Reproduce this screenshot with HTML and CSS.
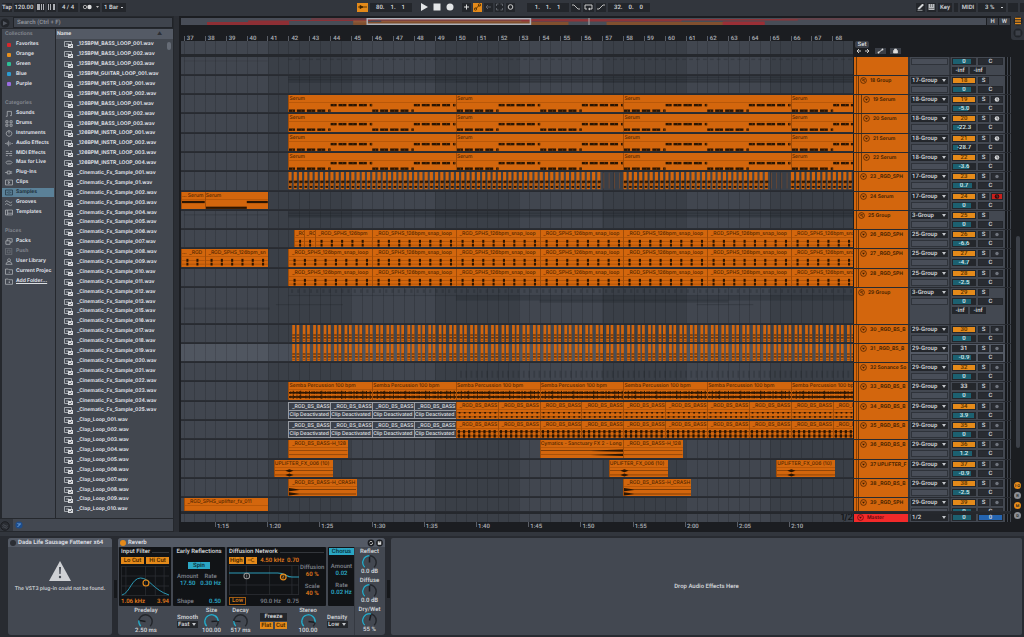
FILE: index.html
```html
<!DOCTYPE html>
<html lang="en">
<head>
<meta charset="utf-8">
<title>Arrangement</title>
<link rel="stylesheet" href="styles.css">
</head>
<body>
<header class="topbar">
  <div class="bar-group">
    <button class="tb w10">Tap</button>
    <input class="tb w20" aria-label="Tempo" value="120.00">
    <button class="tb w9" aria-label="Nudge down"><svg viewBox="0 0 9 8"><path d="M1 1h3v6H1zM5 1h1v6H5zM7 1h1v6H7z" fill="#aeb1b6"/></svg></button>
    <button class="tb w9" aria-label="Nudge up"><svg viewBox="0 0 9 8"><path d="M1 1h1v6H1zM3 1h1v6H3zM6 1h2v6H6z" fill="#aeb1b6"/></svg></button>
    <input class="tb w20" aria-label="Time signature" value="4 / 4">
    <button class="tb w20" aria-label="Metronome"><svg viewBox="0 0 20 8"><circle cx="5" cy="4" r="1.700" fill="none" stroke="#aaa"/><circle cx="9.500" cy="4" r="2.200" fill="#ddd"/><path d="M16 3h3l-1.500 2z" fill="#bbb"/></svg></button>
    <select class="tb w24" aria-label="Quantization"><option>1 Bar</option></select>
  </div>
  <div class="bar-group">
    <button class="tb w11 on" aria-label="Follow"><svg viewBox="0 0 11 8"><path d="M1 4h9M3 2.500v3L6 4z" stroke="#3a2200" fill="#3a2200" stroke-width=".8"/></svg></button>
    <input class="tb w42" aria-label="Position" value="80.    1.    1">
    <div class="transport">
      <button class="flat" aria-label="Play"><svg viewBox="0 0 8 8"><path d="M1 0l7 4-7 4z" fill="#e4e6e8"/></svg></button>
      <button class="flat" aria-label="Stop"><svg viewBox="0 0 8 8"><path d="M.5.5h7v7h-7z" fill="#e4e6e8"/></svg></button>
      <button class="flat" aria-label="Record"><svg viewBox="0 0 8 8"><circle cx="4" cy="4" r="3.500" fill="#e4e6e8"/></svg></button>
    </div>
    <button class="tb w9" aria-label="Overdub"><svg viewBox="0 0 8 8"><path d="M4 1.500v5M1.500 4h5" stroke="#ddd"/></svg></button>
    <button class="tb w9 on" aria-label="Automation arm"><svg viewBox="0 0 8 8"><path d="M2 6l4-4" stroke="#3a2200" stroke-width=".8"/><circle cx="2" cy="6" r="1.200" fill="none" stroke="#3a2200" stroke-width=".7"/><circle cx="6" cy="2" r="1.200" fill="none" stroke="#3a2200" stroke-width=".7"/></svg></button>
    <button class="tb w9" aria-label="Re-enable automation"><svg viewBox="0 0 8 8"><path d="M6.500 4h-5l2-2m-2 2l2 2" stroke="#5c6068" fill="none"/></svg></button>
    <button class="tb w9" aria-label="Capture"><svg viewBox="0 0 8 8"><path d="M1 3V1h2M5 1h2v2M7 5v2H5M3 7H1V5" stroke="#6a6e76" fill="none" stroke-width=".8"/></svg></button>
    <button class="tb w9" aria-label="Session record"><svg viewBox="0 0 8 8"><circle cx="4" cy="4" r="2.300" fill="none" stroke="#ccc"/></svg></button>
    <input class="tb w42 gap-l" aria-label="Loop start" value="1.    1.    1">
    <button class="tb w10" aria-label="Punch in"><svg viewBox="0 0 10 8"><path d="M1 2h2l4 4h2" stroke="#ccc" fill="none" stroke-width=".9"/></svg></button>
    <button class="tb w11" aria-label="Loop"><svg viewBox="0 0 11 8"><path d="M4 6H2V2h7v4H6m1-1L5.500 6 7 7" stroke="#ddd" fill="none" stroke-width=".9"/></svg></button>
    <button class="tb w10" aria-label="Punch out"><svg viewBox="0 0 10 8"><path d="M1 6h2l4-4h2" stroke="#ccc" fill="none" stroke-width=".9"/></svg></button>
    <input class="tb w42" aria-label="Loop length" value="32.    0.    0">
  </div>
  <div class="bar-group end">
    <button class="tb w9" aria-label="Draw mode"><svg viewBox="0 0 8 8"><path d="M2 5l4-4 1 1-4 4H1.500zM1 7.300h5" fill="#e4e6e8" stroke="#e4e6e8" stroke-width=".6"/></svg></button>
    <button class="tb w9" aria-label="Computer keyboard"><svg viewBox="0 0 8 8"><path d="M1 1h6v6H1z" fill="#b9bcc0"/><path d="M3 1v3M5 1v3M1 5.500h6" stroke="#555" stroke-width=".6"/></svg></button>
    <button class="tb w13">Key</button>
    <span class="tb w3"></span>
    <button class="tb w15">MIDI</button>
    <select class="tb w28 load" aria-label="CPU load"><option>3 %</option></select>
    <span class="tb w10"></span>
    <span class="tb w3"></span>
  </div>
</header>

<main class="main">
  <section class="browser">
    <div class="search-row">
      <button class="round" aria-label="Show browser"><svg viewBox="0 0 10 10"><circle cx="5" cy="5" r="4.500" fill="#22252a"/><path d="M3 3l4.500 2.200L3 7.500z" fill="#50555e"/></svg></button>
      <input class="search" type="search" placeholder="Search (Ctrl + F)" aria-label="Search">
    </div>
    <div class="browser-body">
      <nav class="side" id="side"></nav>
      <div class="files">
        <div class="files-head"><span class="files-name">Name</span><span class="sort">▲</span></div>
        <div class="files-body"><ul class="file-list" id="files"></ul><div class="thumb"></div></div>
      </div>
    </div>
    <div class="browser-foot">
      <button class="round" aria-label="Groove pool"><svg viewBox="0 0 10 10"><circle cx="5" cy="5" r="4.300" fill="#2a2d33" stroke="#1d1f23"/><path d="M2.500 4.500q1.200-1.500 2.500 0t2.500 0M2.500 6.500q1.200-1.500 2.500 0t2.500 0" stroke="#555a63" fill="none" stroke-width=".7"/></svg></button>
      <div class="foot-box"><svg class="foot-ico" viewBox="0 0 8 8"><circle cx="4" cy="4" r="3.600" fill="#1d4d8c"/><path d="M2.500 2l2 2-2 2M5 2v2" stroke="#7fb4ee" stroke-width=".8" fill="none"/></svg></div>
    </div>
  </section>

  <section class="arr">
    <div class="overview-row">
      <svg class="overview" viewBox="0 0 804 7" preserveAspectRatio="none">
        <path d="M0 0h804v7H0z" fill="#484d57"/>
        <path d="M26 4h82v3H26zM67 2.500h41v3H67z" fill="#8e2f35"/>
        <path d="M108 2h82v1h-82zM130 .5h160v1H130z" fill="#8a3137"/>
        <path d="M172 4h215v3H172zM425 4h118v3H425z" fill="#81502f"/>
        <path d="M172 2.500h15v2h-15zM200 2.500h150v1.500H200z" fill="#90583a"/>
        <path d="M186 1h430v1.500H186zM340 1.500h160v2H340z" fill="#8e3439"/>
        <path d="M541 3.500h42V7h-42z" fill="#9a2f36"/>
        <path d="M600 .5h158v1H600z" fill="#7d3a40"/>
        <path d="M407 0h1v7h-1z" fill="#aaa"/>
        <path d="M186 .75h163v5.500H186z" fill="none" stroke="#adb0b8" stroke-width="1.500"/>
      </svg>
      <button class="hw">H</button><button class="hw">W</button>
    </div>
    <div class="ruler" id="bars"></div>
    <div class="scrub-row">
      <div class="lane scrub"></div>
      <div class="set">
        <button class="set-btn">Set</button>
        <div class="set-tools">
          <svg viewBox="0 0 16 6"><path d="M6 3H2l2-2M2 3l2 2M10 3h4l-2-2m2 2l-2 2" stroke="#ccc" fill="none"/></svg>
          <button class="tool" aria-label="Automation mode"><svg viewBox="0 0 10 6"><path d="M2.500 5l5-4" stroke="#ddd"/><circle cx="3" cy="4.500" r=".9" fill="#ddd"/><circle cx="7" cy="1.500" r=".9" fill="#ddd"/></svg></button>
          <button class="tool" aria-label="Lock envelopes"><svg viewBox="0 0 10 6"><path d="M3 2.500h4V5H3zM4 2.500V1h2v1.500" fill="#ddd" stroke="#ddd" stroke-width=".7"/></svg></button>
        </div>
      </div>
    </div>
    <div class="tracks" id="tracks"></div>
    <div class="master" id="master"></div>
    <div class="time" id="time"></div>
  </section>

  <aside class="rail">
    <div class="rail-top">
      <button class="rail-btn" aria-label="Arrangement view"><svg viewBox="0 0 10 10"><circle cx="5" cy="5" r="4.500" fill="#212429"/><path d="M2 2.500h6M2 5h6M2 7.500h6" stroke="#e48a1a" stroke-width="1.300"/></svg></button>
      <button class="rail-btn" aria-label="Session view"><svg viewBox="0 0 10 10"><circle cx="5" cy="5" r="4.500" fill="#212429"/><path d="M2.500 2.500h5v5h-5z" fill="#3c4048"/></svg></button>
    </div>
    <div class="rail-scroll"></div>
    <div class="toggles">
      <button class="dot on">I·O</button><button class="dot">R</button><button class="dot on">M</button><button class="dot">D</button>
    </div>
  </aside>
</main>

<footer class="devices">
  <div class="chain-edge"></div>
  <section class="device missing">
    <h2 class="dev-head"><span class="led off"></span>Dada Life Sausage Fattener x64</h2>
    <div class="missing-body">
      <svg class="warn" viewBox="0 0 22 20"><path d="M11 0l11 20H0z" fill="#cfd1d4"/><path d="M10 6h2l-.4 7h-1.200z" fill="#444952"/><circle cx="11" cy="16" r="1.200" fill="#444952"/></svg>
      <p>The VST3 plug-in could not be found.</p>
    </div>
  </section>
  <div class="chain-meter"></div>
  <section class="device reverb">
    <h2 class="dev-head"><span class="led"></span>Reverb
      <span class="dev-icons"><svg viewBox="0 0 16 8"><circle cx="4" cy="4" r="3.400" fill="#1a1c20"/><circle cx="4" cy="4" r="1.600" fill="none" stroke="#bbb" stroke-dasharray="3.500 1.500"/><circle cx="12.500" cy="4" r="3.400" fill="#1a1c20"/><path d="M10.800 2.300h3.400v3.400h-3.400z" fill="#ddd"/><path d="M11.700 2.300h1.600v1.200h-1.600z" fill="#555"/></svg></span>
    </h2>
    <div class="rv">
      <div class="rv-main">
        <div class="panels">
          <div class="panel p-in">
            <h3 class="ttl">Input Filter</h3>
            <div class="pair"><button class="o">Lo Cut</button><button class="o">Hi Cut</button></div>
            <svg class="graph" viewBox="0 0 49 30" preserveAspectRatio="none"><path d="M0 .5h49M0 10h49M0 20h49M0 29.500h49M.5 0v30M5 0v30M25 0v30M35 0v30M44 0v30" stroke="#2b2e33" stroke-width=".8"/><path d="M1 29C9 27 11 12 20 12S33 24 49 29" fill="none" stroke="#2c9cb8"/><circle cx="25.500" cy="17" r="3" fill="none" stroke="#e48a1a" stroke-width="1.200"/></svg>
            <div class="split orange"><span>1.06 kHz</span><span>3.94</span></div>
          </div>
          <div class="panel p-er">
            <h3 class="ttl plain">Early Reflections</h3>
            <button class="b spin">Spin</button>
            <div class="split pad"><span class="lab">Amount<b>17.50</b></span><span class="lab">Rate<b>0.30 Hz</b></span></div>
            <div class="split pad low"><span class="dim">Shape</span><b class="cy">0.50</b></div>
          </div>
          <div class="panel p-df">
            <h3 class="ttl">Diffusion Network</h3>
            <div class="df">
              <div class="df-l">
                <div class="hi"><button class="o">High</button><button class="o" aria-label="Filter type"><svg class="shelf" viewBox="0 0 11 6"><path d="M1 3h4l1-2h2M5 3l1 2h3" stroke="#5c3200" fill="none" stroke-width=".8"/></svg></button><span class="or">4.50 kHz</span><span class="or">0.70</span></div>
                <svg class="graph" viewBox="0 0 69 30" preserveAspectRatio="none"><path d="M0 .5h69M0 20h69M0 29.500h69M.5 0v30M17 0v30M40 0v30M62 0v30M68.500 0v30" stroke="#2b2e33" stroke-width=".8"/><path d="M0 8h48c8 0 8 4 14 4h7" fill="none" stroke="#2c9cb8"/><circle cx="17.500" cy="11" r="2.800" fill="none" stroke="#999"/><circle cx="53.500" cy="12" r="2.800" fill="none" stroke="#e48a1a" stroke-width="1.200"/><path d="M17.500 9.500v3" stroke="#999" stroke-width=".7"/><path d="M52.500 11h2l-2 2h2" stroke="#e48a1a" fill="none" stroke-width=".7"/></svg>
                <div class="hi"><button class="ol">Low</button><span class="dim push">90.0 Hz</span><span class="dim">0.75</span></div>
              </div>
              <div class="df-r"><span class="dim">Diffusion</span><b>60 %</b><span class="dim sp">Scale</span><b>40 %</b></div>
            </div>
          </div>
          <div class="panel p-ch"><button class="b">Chorus</button><span class="dim sp">Amount</span><b>0.02</b><span class="dim sp">Rate</span><b>0.02 Hz</b></div>
        </div>
        <div class="knobs">
          <div class="kn"><span>Predelay</span><svg class="knob" data-value=".2"></svg><span>2.50 ms</span></div>
          <label class="dd">Smooth<span class="pick"><select><option>Fast</option></select></span></label>
          <div class="kn"><span>Size</span><svg class="knob" data-value=".82"></svg><span>100.00</span></div>
          <div class="kn"><span>Decay</span><svg class="knob" data-value=".18"></svg><span>517 ms</span></div>
          <div class="fz"><button class="dk">Freeze</button><div class="pair"><button class="o">Flat</button><button class="o">Cut</button></div></div>
          <div class="kn"><span>Stereo</span><svg class="knob" data-value=".86"></svg><span>100.00</span></div>
          <label class="dd">Density<span class="pick"><select><option>Low</option></select></span></label>
        </div>
      </div>
      <div class="rv-side">
        <div class="kn"><span>Reflect</span><svg class="knob" data-value=".5"></svg><span>0.0 dB</span></div>
        <div class="kn"><span>Diffuse</span><svg class="knob" data-value=".5"></svg><span>0.0 dB</span></div>
        <div class="kn"><span>Dry/Wet</span><svg class="knob" data-value=".55"></svg><span>55 %</span></div>
      </div>
    </div>
  </section>
  <div class="chain-meter"></div>
  <section class="drop">Drop Audio Effects Here</section>
</footer>
<script src="app.js"></script>
</body>
</html>
```

FILE: styles.css
```css
* { box-sizing: border-box; }
:root {
  --chrome: #32363d;
  --panel: #434851;
  --panel-hi: #545a65;
  --dark: #1b1d21;
  --field: #23262b;
  --text: #cdd0d4;
  --orange: #d3660d;
  --amber: #e48a1a;
  --teal: #1c6070;
  --cyan: #2ba7c4;
  --label: Inter, Roboto, sans-serif;
}
body {
  margin: 0;
  height: 100vh;
  display: flex;
  flex-direction: column;
  overflow: hidden;
  background: var(--chrome);
  color: var(--text);
  font: 600 6px/7px Roboto, "Liberation Sans", sans-serif;
  text-rendering: geometricPrecision;
}
button, input, select {
  font: inherit;
  color: inherit;
  text-rendering: inherit;
  border: 0;
  border-radius: 0;
  margin: 0;
  padding: 0;
  background: none;
  appearance: none;
  min-width: 0;
  text-align: center;
}
svg { display: block; }
h2, h3, p, ul { margin: 0; padding: 0; font: inherit; list-style: none; }
b { font-weight: inherit; }

/* top bar */
.topbar { flex: none; height: 16px; padding: 2px 0 4px 2px; display: grid; grid-template-columns: 356fr 290fr 376fr; }
.bar-group { display: flex; gap: 2px; align-items: center; }
.end { justify-content: flex-end; }
.tb { flex: none; height: 9px; background: var(--field); line-height: 9px; display: block; white-space: pre; }
.tb svg { width: 100%; height: 8px; }
.tb.on { background: var(--amber); }
.w3 { width: 4px; } .w9 { width: 9px; } .w10 { width: 10px; } .w11 { width: 11px; }
.w13 { width: 14px; } .w15 { width: 16px; } .w20 { width: 20px; } .w24 { width: 24px; } .w28 { width: 28px; } .w42 { width: 42px; }
.gap-l { margin-left: 10px; }
.transport { display: flex; gap: 5px; padding: 0 6px; }
.flat svg { width: 8px; height: 8px; }
select.tb { background: var(--field) linear-gradient(var(--text), var(--text)) right 3px center / 2px 1px no-repeat; text-align: left; padding-left: 2px; }
select.load { padding-left: 7px; }

/* main */
.main { flex: 1; min-height: 0; display: grid; grid-template-columns: 174px minmax(0, 1fr) 13px; }

/* browser */
.browser { display: flex; flex-direction: column; min-height: 0; padding: 1px 1px 0 0; background: #25282d; }
.search-row { flex: none; display: flex; height: 12px; padding-bottom: 1px; }
.round { flex: none; width: 13px; background: var(--chrome); }
.round svg { width: 10px; height: 10px; }
.search { flex: 1; background: #3f444d; border: 1px solid #202328; text-align: left; padding-left: 3px; }
.search::placeholder { color: #8d9198; opacity: 1; }
.browser-body { flex: 1; min-height: 0; display: grid; grid-template-columns: 53px 1fr; column-gap: 1px; padding-left: 2px; font-family: var(--label); font-size: 5px; font-weight: 700; color: #dcdfe2; }
.side { background: var(--panel); display: grid; grid-auto-rows: 2.02%; overflow: hidden; padding-top: 1px; }
.side-head { color: #80848c; padding-left: 3px; align-self: center; }
.side-item { display: flex; align-items: center; gap: 3px; padding-left: 3px; color: inherit; text-decoration: none; white-space: nowrap; overflow: hidden; }
.side-item svg { width: 8px; height: 7px; flex: none; fill: none; stroke: #b8bbc0; stroke-width: 1; }
.side-item.current { background: #5b8198; color: #20313c; margin-right: 1px; }
.side-item.current svg { stroke: #20313c; }
.side-item.off { opacity: .4; }
.side-item.link { text-decoration: underline; }
.chip { width: 4px; height: 4px; border-radius: 1px; margin: 0 2px; flex: none; background: var(--c); }
.files { background: #42474f; display: flex; flex-direction: column; min-height: 0; overflow: hidden; }
.files-head { flex: none; height: 10px; display: flex; align-items: center; background: var(--panel-hi); padding-left: 1px; color: #e3e5e8; }
.files-name { flex: 1; }
.sort { width: 16px; color: #2c2f35; }
.files-body { flex: 1; min-height: 0; display: flex; }
.file-list { flex: 1; min-width: 0; display: grid; grid-auto-rows: 2.07%; overflow: hidden; padding-top: 1px; }
.file { display: flex; align-items: center; gap: 4px; padding-left: 8px; white-space: nowrap; }
.file svg { width: 9px; height: 7px; flex: none; }
.thumb { width: 4px; height: 8px; border-radius: 2px; background: #666c76; margin: 3px 2px 0 0; }
.browser-foot { flex: none; height: 14px; display: flex; padding: 1px 0; }
.browser-foot .round { padding-top: 1px; }
.foot-box { flex: 1; background: var(--panel); padding: 2px; }
.foot-ico { width: 8px; height: 8px; }

/* arrangement */
.arr { background: var(--dark); border-left: 5px solid #2b2e34; padding: 2px 0 0 2px; display: flex; flex-direction: column; min-width: 0; min-height: 0; }
.overview-row { flex: none; height: 7px; display: flex; gap: 1px; padding-right: 1px; }
.overview { flex: 1; min-width: 0; height: 7px; }
.hw { width: 11px; background: #3b3f47; }
.ruler, .time { flex: none; display: flex; overflow: hidden; margin-right: 158px; color: #a5a8ae; }
.ruler { height: 16px; align-items: flex-end; }
.time { height: 10px; align-items: flex-start; }
.tick { flex: none; border-left: 1px solid #5a5e66; padding-left: 2px; height: 5px; line-height: 5px; white-space: nowrap; }
.time .tick { line-height: 9px; padding-left: 1px; }
.scrub-row, .track, .master { display: grid; grid-template-columns: minmax(0, 1fr) 57px 41px 54px 6px; }
.lane {
  display: flex;
  overflow: hidden;
  min-width: 0;
  background:
    repeating-linear-gradient(90deg, rgba(20, 22, 26, .22) .42% calc(.42% + 1px), transparent calc(.42% + 1px) 1.9776%),
    linear-gradient(90deg, #41464f 12.88%, #3a3f47 12.88% 25.34%, #41464f 25.34% 37.8%, #3a3f47 37.8% 50.26%, #41464f 50.26% 62.72%, #3a3f47 62.72% 75.18%, #41464f 75.18% 87.65%, #3a3f47 87.65%);
}
.scrub-row { flex: none; height: 16px; border-bottom: 3px solid #25282d; }
.set { grid-column: 2 / 6; padding: 0 2px; background: var(--dark); margin-bottom: -3px; }
.set-btn { display: block; width: 14px; height: 7px; background: #3b3f47; border-radius: 2px; }
.set-tools { display: flex; gap: 4px; height: 6px; align-items: center; }
.set-tools > svg { width: 16px; height: 6px; }
.tool { width: 11px; background: #3b3f47; }
.tool svg { width: 11px; height: 6px; }
.tracks { flex: 1; min-height: 0; display: grid; grid-template-rows: minmax(0, 19fr) repeat(11, minmax(0, 19.3fr)) minmax(0, 37fr) repeat(9, minmax(0, 19.3fr)) minmax(0, 14fr); }
.track { overflow: hidden; border-bottom: 1px solid #282b31; background: var(--panel); }
.track .lane { border-bottom: 1px solid #2b2e34; }
.track.picked .lane { background: repeating-linear-gradient(90deg, rgba(20, 22, 26, .18) .42% calc(.42% + 1px), transparent calc(.42% + 1px) 1.9776%), linear-gradient(90deg, #505660 12.88%, #484e58 12.88% 25.34%, #505660 25.34% 37.8%, #484e58 37.8% 50.26%, #505660 50.26% 62.72%, #484e58 62.72% 75.18%, #505660 75.18% 87.65%, #484e58 87.65%); }
.track.picked { background: #545a65; }
.art { flex: none; width: 100%; height: 100%; }
.clip { flex: none; min-width: 0; background: var(--orange); border-left: 1px solid #a04c08; color: #542601; display: flex; flex-direction: column; overflow: hidden; font: 500 5px/8px var(--label); }
.clip-name { flex: none; height: 8px; line-height: 9px; white-space: pre; overflow: hidden; border-bottom: 1px solid #b95809; }
.clip svg { flex: 1; min-height: 0; width: 100%; }
.clip.dead { background: #3c414b; color: #e0e2e5; border: 1px solid #989ca3; border-width: 1px 0 1px 1px; }
.clip.dead .clip-name { border-color: #989ca3; height: 8px; }
.clip.dead .clip-name + .clip-name { border: 0; padding: 0; }

.name { display: flex; background: var(--orange); color: #3d1d00; border-left: 1px solid var(--dark); border-right: 2px solid #30343b; overflow: hidden; padding-left: 2px; }
.name i { flex: none; width: 2px; border-left: 1px solid #8a4206; }
.name i + i { width: 3px; }
.name-in { flex: 1; min-width: 0; display: flex; gap: 3px; border-left: 1px solid #6b3505; padding: 1px 0 0 1px; white-space: nowrap; overflow: hidden; font: 600 5px/8px var(--label); }
.fold { flex: none; width: 7px; height: 7px; }
.name + .io { border-right: 2px solid #30343b; }
.io { padding: 1px 1px 0; display: flex; flex-direction: column; gap: 2px; }
.pick select { width: 100%; height: 7px; flex: none; text-align: left; background: #24272c; line-height: 7px; overflow: hidden; padding-left: 1px; }
.pick { position: relative; display: flex; flex-direction: column; }
.pick::after { content: ""; position: absolute; right: 2px; top: 2px; border: 2px solid transparent; border-top: 3px solid #c3c6ca; border-bottom: 0; pointer-events: none; }
.io-box { flex: none; height: 7px; background: #494e58; border: 1px solid #2f333a; }
.mix { padding: 1px 1px 0; display: grid; grid-template-columns: 24px 11px 12px; grid-auto-rows: 7px; column-gap: 2px; row-gap: 2px; align-content: start; }
.act, .solo, .rec, .vol, .pan { height: 7px; background: #292c32; border: 1px solid #24272c; line-height: 5px; }
.act { background: var(--amber); color: #5c3200; }
.act.mute { background: #24272c; color: #e0e2e5; }
.vol { width: 24px; color: #cfe3e8; background: linear-gradient(90deg, var(--teal) var(--v), #24272c var(--v)); }
.pan { grid-column: 2 / 4; }
.rec svg { width: 100%; height: 5px; }
.rec.arm { background: #c8201c; }
.peak { background: #24272c; width: 16px; text-align: center; }
.peaks { grid-column: 1 / 4; display: flex; gap: 2px; }
.meter { background: linear-gradient(90deg, #16181b 2px, #41464f 2px 3px, #16181b 3px 5px, #41464f 5px); }
.master { flex: none; height: 10px; border-top: 2px solid #25282d; background: var(--panel); }
.master .lane { justify-content: flex-end; font: 500 9px/8px var(--label); color: #101215; }
.master .name { background: #f22a2a; color: #5c0a0a; }
.master .name-in { padding: 0 0 0 1px; border: 0; }
.master .io, .master .mix { padding-top: 0; }
.master .pan { background: #2464b0; }

.rail { display: flex; flex-direction: column; background: var(--dark); min-height: 0; padding-bottom: 13px; align-items: center; }
.rail-top { align-self: stretch; background: var(--chrome); height: 24px; display: flex; flex-direction: column; gap: 2px; align-items: center; border-radius: 0 0 0 3px; }
.rail-btn svg { width: 10px; height: 10px; }
.rail-scroll { flex: 211; width: 4px; border-radius: 2px; background: #3c4048; margin: 196px 0 34px; }
.toggles { display: flex; flex-direction: column; gap: 3px; }
.dot { width: 7px; height: 7px; border-radius: 50%; background: #8b8e94; color: #222; font-size: 4px; line-height: 7px; }
.dot.on { background: var(--amber); }

/* devices */
.devices { flex: none; height: 105px; padding: 2px 2px 2px; display: flex; background: #282b31; border-top: 4px solid var(--chrome); }
.chain-edge { width: 6px; }
.chain-meter { width: 6px; background: linear-gradient(#16181b, #16181b) center 42px / 3px 18px no-repeat; }
.device { border-radius: 3px; background: var(--panel); overflow: hidden; display: flex; flex-direction: column; }
.dev-head { flex: none; height: 9px; background: var(--panel-hi); display: flex; align-items: center; gap: 2px; padding-left: 2px; color: #dcdee1; }
.led { width: 6px; height: 6px; border-radius: 50%; background: var(--amber); }
.led.off { background: #2b2e34; }
.dev-icons { margin-left: auto; margin-right: 2px; }
.dev-icons svg { width: 16px; height: 8px; }
.missing { width: 104px; white-space: nowrap; }
.missing-body { flex: 1; display: flex; flex-direction: column; align-items: center; padding-top: 14px; gap: 5px; font: 600 5px/7px var(--label); }
.warn { width: 22px; height: 20px; }
.reverb { width: 267px; }
.rv { flex: 1; display: flex; padding: 0 1px; min-height: 0; }
.rv-main { flex: 1; display: flex; flex-direction: column; min-width: 0; }
.panels { height: 59px; display: grid; grid-template-columns: 52px 52px 99px 27px; column-gap: 2px; }
.panel { background: #111316; padding: 1px 2px; display: flex; flex-direction: column; border-radius: 1px; min-width: 0; white-space: nowrap; }
.ttl { display: flex; gap: 2px; height: 8px; line-height: 8px; align-items: center; }
.ttl::after { content: ""; flex: 1; border-bottom: 1px solid #33363b; }
.ttl.plain::after { display: none; }
.ttl.plain { justify-content: center; }
.pair { display: flex; gap: 2px; }
.o { background: var(--amber); color: #4f2b00; height: 7px; flex: 1; line-height: 7px; }
.p-in .pair { margin: 1px 0; }
.graph { width: 100%; height: 30px; margin: 1px 0 2px; }
.split { display: flex; justify-content: space-between; }
.orange, .or, .df-r b { color: #e07a1c; }
.dim, .lab { color: #777c84; }
.lab b, .cy, .p-ch b { color: var(--cyan); display: block; }
.b { background: var(--cyan); color: #0c3540; height: 7px; }
.spin { width: 22px; align-self: center; margin: 6px 0 4px; }
.pad { padding: 0 2px; text-align: center; }
.low { margin-top: 11px; }
.df { display: grid; grid-template-columns: 70px 1fr; column-gap: 1px; }
.hi { display: flex; gap: 2px; align-items: center; height: 8px; justify-content: space-between; }
.hi .o { flex: none; padding: 0 1px; }
.hi .o .shelf { width: 9px; height: 6px; }
.ol { border: 1px solid #a05c12; color: #d07a1c; height: 8px; line-height: 6px; padding: 0 2px; }
.push { margin-left: auto; margin-right: 4px; }
.df-r, .p-ch { display: flex; flex-direction: column; text-align: center; }
.df-r { padding-top: 8px; }
.df-r .sp { margin-top: 5px; }
.p-ch { padding: 1px; }
.p-ch .sp { margin-top: 8px; }
.p-ch .sp ~ .sp { margin-top: 5px; }
.knobs { flex: 1; display: grid; grid-template-columns: 30px 37px 27px 31px 35px 34px 23px; align-items: center; justify-items: center; padding-left: 12px; }
.kn { display: flex; flex-direction: column; align-items: center; line-height: 6px; white-space: nowrap; }
.knob { width: 17px; height: 17px; margin: -1px 0 -2px; }
.dd { display: flex; flex-direction: column; justify-self: end; width: 21px; }
.dk { background: var(--field); height: 8px; width: 27px; }
.fz { display: flex; flex-direction: column; gap: 1px; }
.rv-side { width: 30px; display: flex; flex-direction: column; justify-content: space-around; align-items: center; border-left: 1px solid #353941; }
.drop { flex: 1; background: var(--panel); display: flex; align-items: center; justify-content: center; border-radius: 2px; }
```

FILE: app.js
```js
const START = 36.866;
const SPAN = 32.1;
const END = START + SPAN;
const el = id => document.getElementById(id);
const pct = bars => (bars / SPAN * 100) + '%';
const pad = n => String(n).padStart(3, '0');

/* browser sidebar */
const ICON = {
  Sounds: 'M3 9V2h6v6M3 9H1M9 8H7',
  Drums: 'M1 1h3v3H1zM7 1h3v3H7zM1 6h3v3H1zM7 6h3v3H7z',
  Instruments: 'M5.500 1a4 4 0 1 0 .1 0M5.500 1v4',
  'Audio Effects': 'M0 5h2M3 3v4M5 1v8M7 3v4M9 5h2',
  'MIDI Effects': 'M1 2h4M7 2h3M1 5h9M1 8h3M6 8h4',
  'Max for Live': 'M3 3L1 5l2 2M8 3l2 2-2 2M3 3h5M3 7h5',
  'Plug-Ins': 'M0 5h3M3 3h4v4H3zM7 4h3M7 6h3',
  Clips: 'M.5 1.500h10v7H.5zM4.500 3.500v3l2.500-1.500z',
  Samples: 'M.5 1.500h10v7H.5zM3 4v2M5.500 3v4M8 4v2',
  Grooves: 'M0 4q2-3 5 0t5 0M0 8q2-3 5 0t5 0',
  Templates: 'M.5 1.500h10v7H.5zM3.500 1.500v7M3.500 6h7',
  Packs: 'M1 4h6v5H1zM3 4V1h7v5H7',
  Push: 'M.5.5h9v9h-9zM3 3h4v4H3z',
  'User Library': 'M5.500 1a2 2 0 1 0 .1 0M1 9q1-4 4.500-4T10 9z',
  'Current Projec': 'M.5 9V1.500h4l1 1h5V9zM5 6h2',
  'Add Folder...': 'M.5 9V1.500h4l1 1h5V9zM5 6h2M6 5v2'
};
const colors = { Favorites: '#d7282c', Orange: '#e8901d', Green: '#2cbf95', Blue: '#2a9bd0', Purple: '#9a6ce0' };
const side = [
  '#Collections', ...Object.keys(colors), '',
  '#Categories', 'Sounds', 'Drums', 'Instruments', 'Audio Effects', 'MIDI Effects', 'Max for Live', 'Plug-Ins', 'Clips', 'Samples', 'Grooves', 'Templates', '',
  '#Places', 'Packs', 'Push', 'User Library', 'Current Projec', 'Add Folder...'
];
el('side').innerHTML = side.map(s => {
  if (!s) return '<span></span>';
  if (s[0] === '#') return `<span class="side-head">${s.slice(1)}</span>`;
  const mark = colors[s] ? `<span class="chip" style="--c:${colors[s]}"></span>` : `<svg viewBox="0 0 11 10"><path d="${ICON[s]}"/></svg>`;
  const cls = { Samples: ' current', Push: ' off', 'Add Folder...': ' link' }[s] || '';
  return `<a href="#" class="side-item${cls}">${mark}${s}</a>`;
}).join('');

/* file list */
const range = (prefix, from, to) => Array.from({ length: to - from + 1 }, (_, i) => prefix + pad(from + i));
const files = [
  ...range('_125BPM_BASS_LOOP_', 1, 3), '_125BPM_GUITAR_LOOP_001', ...range('_125BPM_INSTR_LOOP_', 1, 2),
  ...range('_126BPM_BASS_LOOP_', 1, 3), ...range('_126BPM_INSTR_LOOP_', 1, 4),
  '_Cinematic_Fx_Sample_001', '_Cinematic_Fx_Sample_01', ...range('_Cinematic_Fx_Sample_', 2, 13), ...range('_Cinematic_Fx_Sample_', 15, 25),
  ...range('_Clap_Loop_', 1, 10)
];
const fileIcon = '<svg viewBox="0 0 9 7"><path d="M.5.5h7v5h-7zM2 3h3" fill="none" stroke="#aeb2b8" stroke-width=".9"/><path d="M4 3h5v4H4z" fill="#d9dbde"/><path d="M5.200 5l1 1 1.800-2" stroke="#42474f" fill="none" stroke-width=".8"/></svg>';
el('files').innerHTML = files.map(f => `<li class="file">${fileIcon}<span>${f}.wav</span></li>`).join('');

/* rulers */
const tick = (label, lead, width) => `<span class="tick" style="margin-left:${pct(lead)};width:${pct(width)}">${label}</span>`;
el('bars').innerHTML = Array.from({ length: 32 }, (_, i) => tick(37 + i, i ? 0 : 37 - START, 1)).join('');
const times = ['1:15', '1:20', '1:25', '1:30', '1:35', '1:40', '1:45', '1:50', '1:55', '2:00', '2:05', '2:10'];
el('time').innerHTML = times.map((t, i) => tick(t, i ? 0 : 1.62, 2.495)).join('');

/* clip artwork; x is in hundredths of a bar, y in percent of the clip body */
const INK = '#2a1503';
const box = (x, y, w, h, fill = INK) => `<rect x="${x}" y="${y}" width="${w}" height="${h}" fill="${fill}"/>`;
const svg = (bars, body) => `<svg viewBox="0 0 ${bars * 100} 100" preserveAspectRatio="none">${body}</svg>`;
const ART = {
  serum(bars) {
    let s = '';
    for (let b = 0; b < bars; b += 2) {
      const y = b % 4 ? 10 : 70;
      [[0, 29], [38, 38], [86, 40], [136, 38], [188, 12]].forEach(([x, w]) => {
        s += box(b * 100 + x, y, w, 26) + box(b * 100 + x + w / 2, y, 3, 26, '#7a3d08');
      });
    }
    return s;
  },
  hits(bars) {
    let s = box(0, 34, bars * 100, 5, '#8a430a') + box(0, 74, bars * 100, 5, '#8a430a');
    for (let x = 22; x < bars * 100; x += 50) s += box(x, 20, 10, 32) + box(x, 62, 10, 30);
    return s;
  },
  wave(bars) {
    let s = box(0, 23, bars * 100, 13) + box(0, 69, bars * 100, 13);
    for (let x = 0, i = 0; x < bars * 100; x += 6, i++) {
      const h = 14 + (i * i * 13 % 17) + (i * 7 % 23 > 15 ? 12 : 0);
      s += box(x, 29 - h / 2, 5, h) + box(x, 75 - h / 2, 5, h);
    }
    return s;
  },
  bass(bars) {
    let s = box(0, 27, bars * 100, 5, '#5f2e06') + box(0, 72, bars * 100, 5, '#5f2e06');
    for (let x = 8; x < bars * 100; x += 25) s += box(x, 22, 9, 16) + box(x, 67, 9, 16);
    return s;
  },
  beat(bars) {
    let s = box(0, 27, bars * 100, 6) + box(0, 72, bars * 100, 6);
    for (let x = 4; x < bars * 100; x += 25) s += box(x, 12, 11, 36) + box(x, 57, 11, 36);
    return s;
  },
  tail(bars) {
    const w = bars * 100;
    return `<path d="M0 12L50 26H${w}v7H50L0 46zM0 58l50 14H${w}v7H50L0 92z" fill="${INK}"/>`;
  },
  lines(bars) {
    return box(0, 22, bars * 100, 6, '#6e3506') + box(0, 70, bars * 100, 6, '#6e3506');
  },
  swell(bars) {
    const w = bars * 100;
    return `<path d="M0 27h${w * .6}L${w} 16v26L${w * .6} 32H0zM0 72h${w * .6}L${w} 61v26L${w * .6} 77H0z" fill="${INK}"/>`;
  },
  rise(bars) {
    const w = bars * 100;
    return box(0, 26, w, 6, '#5f2e06') + box(0, 72, w, 6, '#5f2e06') + `<path d="M50 29l20-16 20 16-20 16zM50 75l20-16 20 16-20 16z" fill="${INK}"/>`;
  },
  low(bars) { return box(0, 66, bars * 50, 14, '#7a3d08') + box(0, 50, bars * 30, 10, '#b95809'); },
  hold(bars) { return box(0, 10, bars * 100, 24); },
  step(bars) { return box(0, 72, bars * 66, 24) + box(bars * 66, 10, bars * 34, 24); }
};

const every = (from, step, label, art) => {
  const out = [];
  for (let b = from; b < END; b += step) out.push([b, Math.min(b + step, END), label, art]);
  return out;
};
const clips = list => {
  let at = START;
  return list.map(([a, b, label, art]) => {
    const lead = a - at;
    at = b;
    const pos = `margin-left:${pct(lead)};width:${pct(b - a)}`;
    if (art === 'dead') return `<div class="clip dead" style="${pos}"><div class="clip-name">${label}</div><div class="clip-name">Clip Deactivated</div></div>`;
    return `<div class="clip" style="${pos}"><div class="clip-name">${label}</div>${svg(b - a, ART[art](b - a))}</div>`;
  }).join('');
};
/* whole-lane drawings: x in hundredths of a bar */
const laneArt = body => `<svg class="art" viewBox="${START * 100} 0 ${SPAN * 100} 100" preserveAspectRatio="none">${body}</svg>`;
const strips = () => {
  let s = '';
  for (let i = 0; i * 25 + 4200 < END * 100; i++) {
    const x = 4200 + i * 25;
    const rest = (x >= 5700 && x < 5800) || (x >= 6500 && x < 6600);
    if (rest) { s += box(x + 5, 4, 3, 92, '#7a4a2c'); continue; }
    s += box(x, 0, 15, 100, '#d3660d') + box(x + 2, 50, 15, 13) + box(x + 2, 80, 12, 12) + box(x + 2, 66, 10, 5, '#7a3d08');
  }
  return laneArt(s);
};
const pairs = () => {
  let s = '';
  for (let x = 4218; x < END * 100; x += 50) {
    [0, 21].forEach(d => { s += box(x + d, 0, 13, 100, '#d3660d') + box(x + d, 54, 13, 8, '#6e3506') + box(x + d, 70, 13, 9, '#6e3506') + box(x + d, 88, 13, 5, '#9a4a08'); });
  }
  return laneArt(s);
};
const SHADE = 'rgba(25,28,33,.22)';
const ghost = (...r) => laneArt(r.map(a => box(...a, SHADE)).join(''));
const dashes = (from, to, step, y, h, w) => {
  let s = '';
  for (let x = from; x < to; x += step) s += box(x, y, w, h, SHADE);
  return s;
};

const snap = '  _RGD_SPHS_126bpm_snap_loop';
const serum = () => clips(every(42, 8, 'Serum', 'serum'));
const dead = () => [42, 44, 46, 48].map(b => [b, b + 2, '  _RGD_BS_BASS', 'dead']);
const lanes = {
  17: laneArt(box(3700, 22, 400, 3, SHADE) + dashes(4200, 6897, 33, 10, 8, 18)),
  18: ghost([4200, 0, 2700, 40], [4200, 5, 2700, 6], [4200, 18, 2700, 6], [5000, 30, 1900, 6]),
  19: serum(), 20: serum(), 21: serum(), 22: serum(),
  23: strips(),
  24: clips([[START, 38, '... Serum', 'hold'], [38, 41, 'Serum', 'step']]),
  25: ghost([3700, 20, 400, 5], [4200, 0, 2700, 38], [4200, 10, 2700, 6], [4200, 24, 2700, 6]),
  26: clips([[42.25, 42.75, ' _RC', 'hits'], [42.75, 43.25, ' _RC', 'hits'], [43.25, 46, '  _RGD_SPHS_126bpm', 'hits'], ...every(46, 4, snap, 'hits')]),
  27: clips([[START, 38, '...  _RGD', 'hits'], [38, 41, '  _RGD_SPHS_126bpm_sn', 'hits'], ...every(42, 4, snap, 'hits')]),
  28: clips(every(42, 4, snap, 'hits')),
  29: laneArt(box(3700, 56, 410, 6, SHADE) + dashes(4212, 6897, 30, 4, 10, 10) + [[4200, 20, 2700, 3], [5000, 22, 1900, 14], [5400, 34, 900, 8], [4140, 46, 320, 3], [6150, 46, 270, 3]].map(a => box(...a, SHADE)).join('')),
  30: pairs(), 31: pairs(),
  32: laneArt(dashes(5020, 6897, 25, 45, 40, 8)),
  33: clips(every(42, 4, 'Semba Percussion 100 bpm', 'wave')),
  34: clips([...dead(), ...every(50, 2, '  _RGD_BS_BASS', 'bass')]),
  35: clips([...dead(), ...every(50, 2, '  _RGD_BS_BASS', 'beat')]),
  36: clips([[42, 44.84, '  _RGD_BS_BASS-H_128', 'lines'], [54, 58, 'Cymatics - Sanctuary FX 2 - Long', 'swell'], [58, 60.84, '  _RGD_BS_BASS-H_128', 'lines']]),
  37: clips([41.3, 57.3, 65.3].map(b => [b, b + 2.82, 'UPLIFTER_FX_006 (10)', 'rise'])),
  38: clips([[42, 45.25, '  _RGD_BS_BASS-H_CRASH', 'tail'], [58, 61.25, '  _RGD_BS_BASS-H_CRASH', 'tail']]),
  39: clips([[37, 41, '  _RGD_SPHS_uplifter_fx_011', 'low']])
};

/* [number, name, depth, routing, volume, fill %, kind] */
const tracks = [
  [17, '', 0, '', '0', 84, 'top'],
  [18, '18 Group', 1, '17-Group', '0', 84, 'group'],
  [19, '19 Serum', 2, '18-Group', '-5.0', 66, 'midi'],
  [20, '20 Serum', 2, '18-Group', '-22.3', 30, 'midi'],
  [21, '21 Serum', 2, '18-Group', '-28.7', 22, 'midi'],
  [22, '22 Serum', 2, '18-Group', '-3.6', 72, 'midi'],
  [23, '23 _RGD_SPH', 1, '17-Group', '0.7', 88, 'audio'],
  [24, '24 Serum', 1, '17-Group', '0', 84, 'arm'],
  [25, '25 Group', 0, '3-Group', '0', 84, 'group'],
  [26, '26 _RGD_SPH', 1, '25-Group', '-6.6', 62, 'audio'],
  [27, '27 _RGD_SPH', 1, '25-Group', '-4.7', 68, 'audio'],
  [28, '28 _RGD_SPH', 1, '25-Group', '-2.5', 78, 'audio'],
  [29, '29 Group', 0, '3-Group', '0', 84, 'group'],
  [30, '30 _RGD_BS_B', 1, '29-Group', '0', 84, 'audio'],
  [31, '31 _RGD_BS_B', 1, '29-Group', '-0.9', 80, 'audio'],
  [32, '32 Sonance So', 1, '29-Group', '0', 84, 'audio'],
  [33, '33 _RGD_BS_B', 1, '29-Group', '0', 84, 'audio'],
  [34, '34 _RGD_BS_B', 1, '29-Group', '3.9', 94, 'audio'],
  [35, '35 _RGD_BS_B', 1, '29-Group', '0', 84, 'audio'],
  [36, '36 _RGD_BS_B', 1, '29-Group', '1.2', 88, 'audio'],
  [37, '37 UPLIFTER_F', 1, '29-Group', '-0.9', 80, 'audio'],
  [38, '38 _RGD_BS_B', 1, '29-Group', '-2.5', 78, 'audio'],
  [39, '39 _RGD_SPH', 1, '29-Group', '0', 84, 'audio']
];
const fold = kind => `<svg class="fold" viewBox="0 0 7 7"><circle cx="3.500" cy="3.500" r="2.900" fill="none" stroke="currentColor" stroke-width=".7"/>${kind === 'group' ? '<path d="M2 3l3 1.500M2.500 2l2.500 1" stroke="currentColor" stroke-width=".7"/>' : '<path d="M2 2.800h3L3.500 4.800z" fill="currentColor"/>'}</svg>`;
const recDot = kind => kind === 'midi' || kind === 'arm'
  ? `<svg viewBox="0 0 10 5"><circle cx="5" cy="2.500" r="2.300" fill="${kind === 'arm' ? '#3a0606' : '#d5d7da'}"/><path d="M5 1v2h1.500" stroke="#555" fill="none" stroke-width=".7"/></svg>`
  : '<svg viewBox="0 0 10 5"><circle cx="5" cy="2.500" r="1.700" fill="#70757e"/></svg>';
const route = (value, label) => `<span class="pick"><select aria-label="${label}"><option>${value}</option></select></span>`;
const volume = (v, fill, n) => `<input class="vol" aria-label="Volume ${n}" value="${v}" style="--v:${fill}%">`;
const peaks = '<div class="peaks"><span class="peak">-inf</span><span class="peak">-inf</span></div>';

el('tracks').innerHTML = tracks.map(([n, name, depth, out, vol, fill, kind]) => {
  const muted = n === 31 || n === 33;
  const top = kind === 'top';
  const mixTop = top ? '' : `<button class="act${muted ? ' mute' : ''}">${n}</button><button class="solo">S</button>${kind === 'group' ? '<span></span>' : `<button class="rec${kind === 'arm' ? ' arm' : ''}" aria-label="Arm ${n}">${recDot(kind)}</button>`}`;
  return `<div class="track${n === 31 ? ' picked' : ''}">
    <div class="lane">${lanes[n]}</div>
    <div class="name">${'<i></i>'.repeat(depth)}<div class="name-in">${top ? '' : fold(kind)}<span>${name}</span></div></div>
    <div class="io">${top ? '' : route(out, 'Output ' + n)}<div class="io-box"></div></div>
    <div class="mix">${mixTop}${volume(vol, fill, n)}<button class="pan">C</button>${top || n === 29 ? peaks : ''}</div>
    <div class="meter"></div>
  </div>`;
}).join('');
el('master').innerHTML = `<div class="lane">1/2</div>
  <div class="name"><div class="name-in">${fold('')}<span>Master</span></div></div>
  <div class="io">${route('1/2', 'Master output')}</div>
  <div class="mix">${volume('0', 84, 'Master')}<button class="pan">0</button></div>
  <div class="meter"></div>`;

/* device knobs */
const polar = (deg, r) => {
  const a = (deg - 90) * Math.PI / 180;
  return (8 + r * Math.cos(a)).toFixed(2) + ' ' + (8 + r * Math.sin(a)).toFixed(2);
};
const arc = (from, to, color) => `<path d="M${polar(from, 6.3)}A6.3 6.3 0 ${to - from > 180 ? 1 : 0} 1 ${polar(to, 6.3)}" fill="none" stroke="${color}" stroke-width="1.4"/>`;
document.querySelectorAll('.knob').forEach(k => {
  const at = -135 + 270 * Number(k.dataset.value);
  k.setAttribute('viewBox', '0 0 16 16');
  k.innerHTML = arc(-135, 135, '#24272c') + arc(-135, at, '#2ba7c4') + `<path d="M8 8L${polar(at, 5.5)}" stroke="#1a1c20" stroke-width="1.4"/>`;
});
```
